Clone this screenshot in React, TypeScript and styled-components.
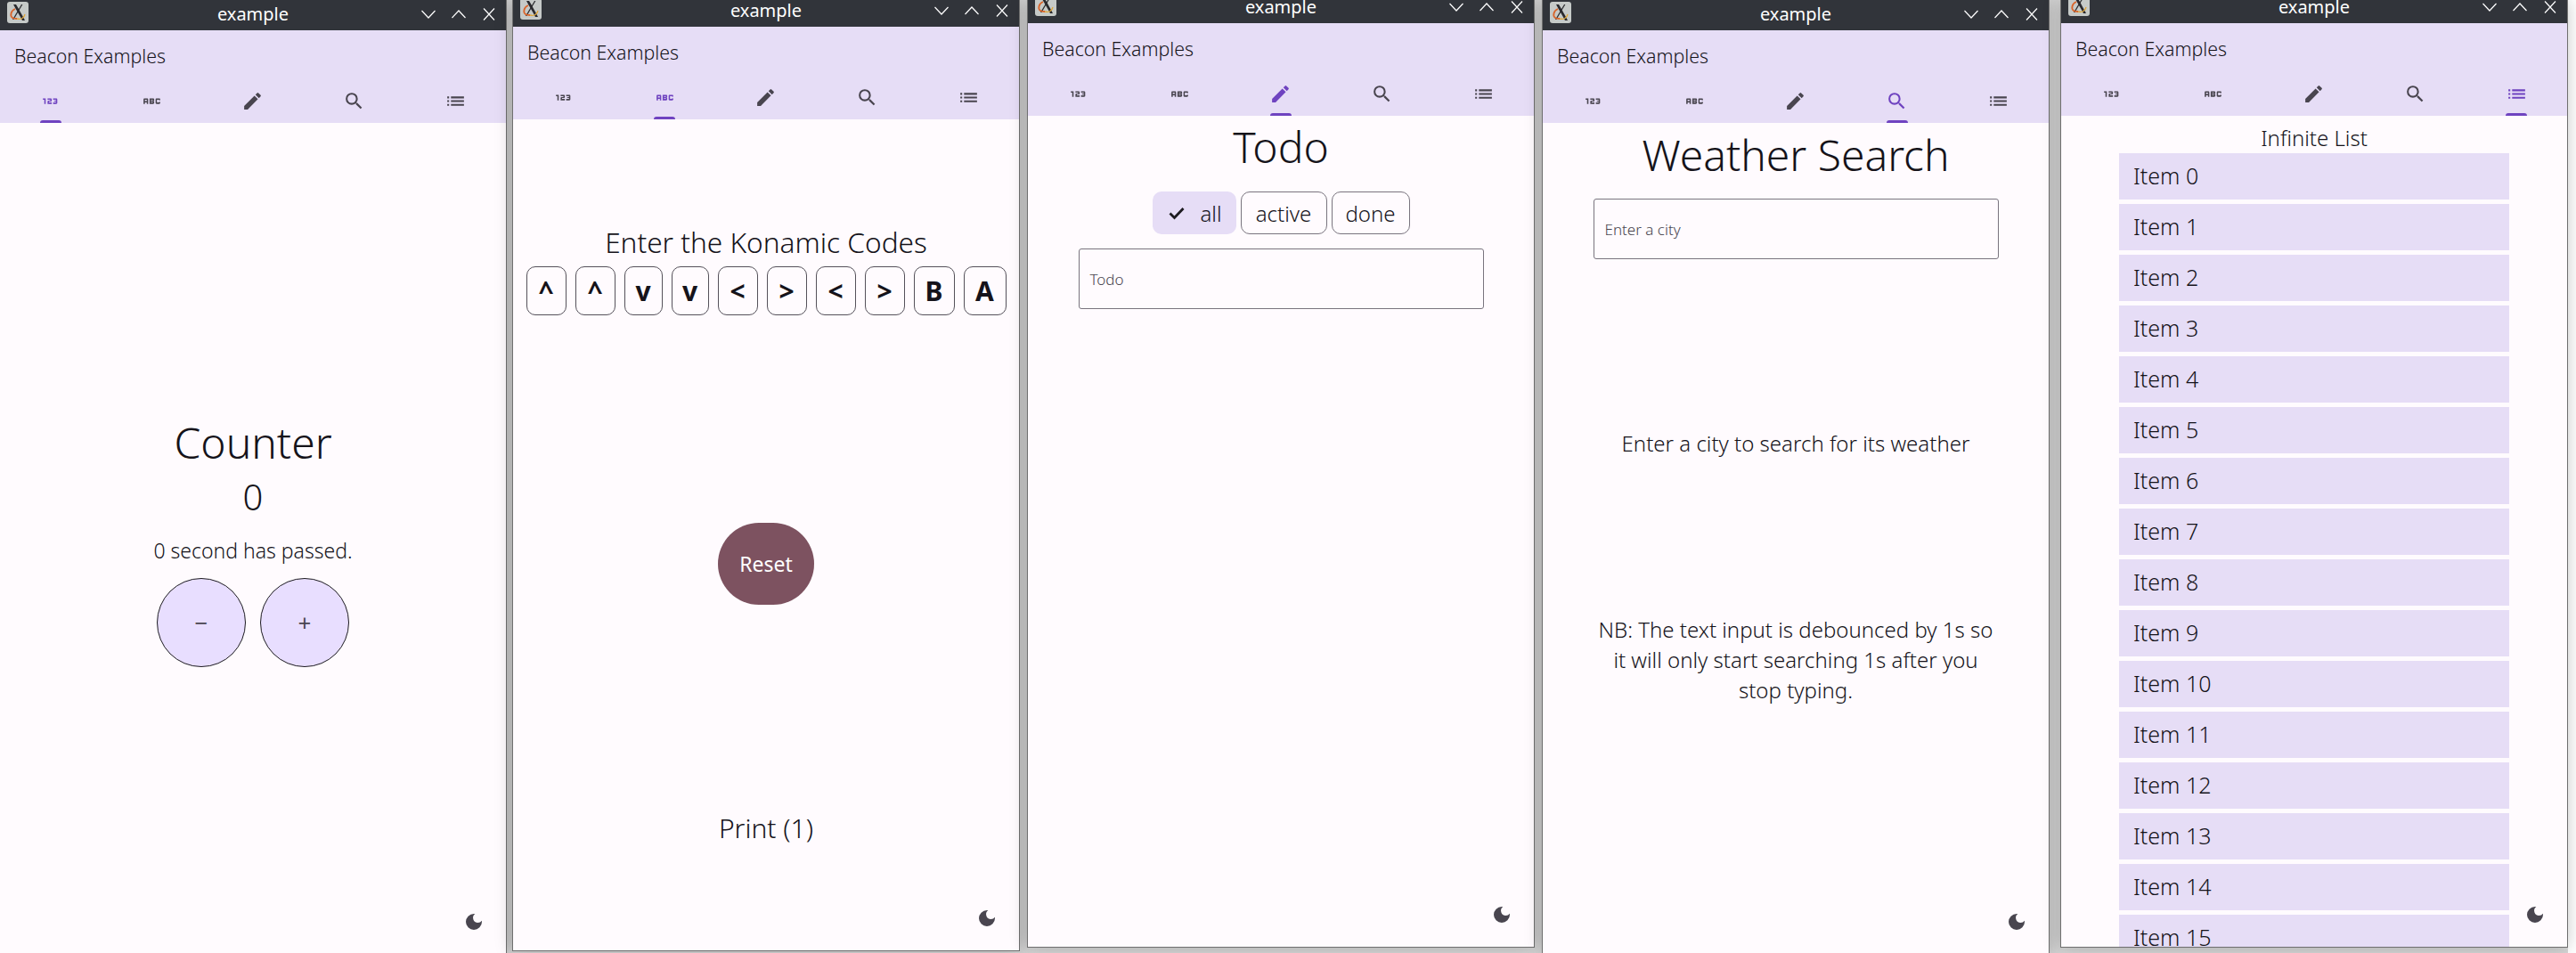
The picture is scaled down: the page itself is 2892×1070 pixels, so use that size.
import React from 'react'
import styled, { createGlobalStyle } from 'styled-components'
import { Md123, MdAbc, MdEdit, MdSearch, MdList, MdDarkMode } from 'react-icons/md'

const GlobalStyle = createGlobalStyle`
    html, body {
        margin: 0;
        padding: 0;
        background: #fff;
    }
    * {
        box-sizing: border-box;
    }
`

const UI_FONT = `"Noto Sans", "Open Sans", sans-serif`

const Desktop = styled.div`
    display: flex;
    align-items: flex-start;
    width: 2892px;
    height: 1070px;
    overflow: hidden;
    background: #d6d6d6;
    font-family: ${UI_FONT};
`

const Window = styled.section<{ $gap: number; $bottom: number }>`
    position: relative;
    display: flex;
    flex-direction: column;
    flex: none;
    width: ${({ $gap }) => ($gap ? 570 : 569)}px;
    height: ${({ $bottom }) => $bottom}px;
    margin-left: ${({ $gap }) => $gap}px;
    border-right: 1px solid #6f6f6f;
    border-bottom: 1px solid #6f6f6f;
    border-left: ${({ $gap }) => ($gap ? '1px solid #6f6f6f' : 'none')};
    background: #fffbfe;
    box-shadow: 0 0 18px rgba(0, 0, 0, 0.22);
`

const TitleBar = styled.header<{ $height: number }>`
    position: relative;
    flex: none;
    display: flex;
    align-items: flex-end;
    justify-content: center;
    height: ${({ $height }) => $height}px;
    padding-bottom: 3px;
    background: #31343a;
    color: #fff;
    font-size: 20px;
    line-height: 30px;
`

const Logo = styled.svg`
    position: absolute;
    left: 8px;
    bottom: 8px;
    width: 24px;
    height: 24px;
`

const Controls = styled.div`
    position: absolute;
    right: 11px;
    bottom: 10px;
    display: flex;
    gap: 18px;
`

const AppBar = styled.div`
    flex: none;
    height: 104px;
    background: #e6ddf6;
`

const AppTitle = styled.div`
    height: 58px;
    padding: 16px 16px 0;
    color: #15131a;
    font-size: 21.3px;
    line-height: 26px;
    font-weight: 300;
`

const Tabs = styled.div`
    display: grid;
    grid-template-columns: repeat(5, 1fr);
    height: 46px;
`

const Tab = styled.div<{ $active?: boolean }>`
    position: relative;
    display: flex;
    justify-content: center;
    padding-top: 9px;
    color: ${({ $active }) => ($active ? '#6f43c0' : '#49454f')};

    ${({ $active }) =>
        $active &&
        `&::after {
            content: '';
            position: absolute;
            bottom: 0;
            left: 50%;
            width: 24px;
            height: 3px;
            margin-left: -12px;
            border-radius: 3px 3px 0 0;
            background: #6f43c0;
        }`}
`

const Body = styled.main`
    position: relative;
    flex: 1;
    min-height: 0;
    overflow: hidden;
    display: flex;
    flex-direction: column;
    align-items: center;
    color: #15131a;
`

const Moon = styled(MdDarkMode)`
    position: absolute;
    right: 24px;
    bottom: 24px;
    color: #49454f;
`

const BigTitle = styled.h1<{ $top?: number }>`
    margin: ${({ $top }) => $top ?? 0}px 0 0;
    font-size: 48px;
    line-height: 60px;
    font-weight: 300;
`

const Count = styled.div`
    margin-top: 6px;
    font-size: 40px;
    line-height: 50px;
    font-weight: 300;
`

const Elapsed = styled.div`
    margin-top: 18px;
    font-size: 23px;
    line-height: 34px;
    font-weight: 300;
`

const CounterRow = styled.div`
    display: flex;
    gap: 16px;
    margin-top: 14px;
`

const RoundButton = styled.button`
    display: flex;
    align-items: center;
    justify-content: center;
    width: 100px;
    height: 100px;
    padding: 0;
    border: 1px solid #1d1b20;
    border-radius: 50%;
    background: #e8deff;
    color: #49454f;
    font-family: ${UI_FONT};
    font-size: 26px;
`

const Heading = styled.h2<{ $top: number }>`
    margin: ${({ $top }) => $top}px 0 0;
    font-size: 31.6px;
    line-height: 40px;
    font-weight: 300;
`

const KeyRow = styled.div`
    display: flex;
    gap: 10px;
    margin-top: 7px;
`

const KeyButton = styled.div<{ $width: number }>`
    display: flex;
    align-items: center;
    justify-content: center;
    width: ${({ $width }) => $width}px;
    height: 55px;
    border: 1px solid #55515a;
    border-radius: 10px;
    font-size: 30px;
    font-weight: 700;
`

const ResetButton = styled.button`
    width: 108px;
    height: 92px;
    margin-top: 233px;
    border: none;
    border-radius: 46px;
    background: #7d5260;
    color: #fff;
    font-family: ${UI_FONT};
    font-size: 23px;
`

const PrintLabel = styled.div`
    margin-top: 231px;
    font-size: 30px;
    line-height: 40px;
    font-weight: 300;
`

const ChipRow = styled.div`
    display: flex;
    gap: 5px;
    margin-top: 20px;
`

const Chip = styled.div<{ $width: number; $selected?: boolean }>`
    display: flex;
    align-items: center;
    justify-content: center;
    gap: 14px;
    width: ${({ $width }) => $width}px;
    height: 48px;
    border: ${({ $selected }) => ($selected ? 'none' : '1px solid #79747e')};
    border-radius: 10px;
    background: ${({ $selected }) => ($selected ? '#e6ddf6' : 'transparent')};
    font-size: 24px;
    font-weight: 300;
`

const TextField = styled.div<{ $top: number }>`
    display: flex;
    align-items: center;
    width: 455px;
    height: 68px;
    margin-top: ${({ $top }) => $top}px;
    padding: 0 12px;
    border: 1px solid #79747e;
    border-radius: 3px;
    color: #49454f;
    font-size: 17px;
    font-weight: 300;
`

const WeatherNote = styled.p<{ $top: number }>`
    width: 460px;
    margin: ${({ $top }) => $top}px 0 0;
    font-size: 24px;
    line-height: 34px;
    font-weight: 300;
    text-align: center;
`

const ListTitle = styled.div`
    margin-top: 9px;
    font-size: 24px;
    line-height: 32px;
    font-weight: 300;
`

const ItemList = styled.div`
    display: flex;
    flex-direction: column;
    gap: 5px;
    align-self: stretch;
    margin: 1px 65px 0;
`

const Item = styled.div`
    flex: none;
    display: flex;
    align-items: center;
    height: 52px;
    padding: 0 16px 2px;
    background: #e6ddf6;
    font-size: 25px;
    font-weight: 300;
`

const Spacer = styled.div`
    flex: 1;
    align-self: stretch;
    background: #fff;
`

const XLogo = () => (
    <Logo viewBox="0 0 24 24">
        <rect width="24" height="24" rx="3" fill="#c6cac8" />
        <path d="M7 3c3 6 7 12 10 18h3C17 15 13 8 10 3z" fill="#2a2a2e" />
        <path d="M16 3 6 20h1.4L17.4 3z" fill="#2a2a2e" />
        <path d="M9 8c-5 2-6 8-3 10 1.500 1 3 1 5 1" fill="none" stroke="#d9642a" strokeWidth="1.8" />
        <path d="M11 19c4 1 8 0 9-5" fill="none" stroke="#e0a83c" strokeWidth="1.3" />
    </Logo>
)

const WindowControls = () => (
    <Controls>
        <svg width="16" height="16" viewBox="0 0 16 16" fill="none" stroke="#fff" strokeWidth="1.2">
            <path d="M0.5 4 8 12 15.500 4" />
        </svg>
        <svg width="16" height="16" viewBox="0 0 16 16" fill="none" stroke="#fff" strokeWidth="1.2">
            <path d="M0.5 12 8 4 15.500 12" />
        </svg>
        <svg width="16" height="16" viewBox="0 0 16 16" fill="none" stroke="#fff" strokeWidth="1.2">
            <path d="M2 1.500 14 14.500M14 1.500 2 14.500" />
        </svg>
    </Controls>
)

const CheckMark = () => (
    <svg width="24" height="24" viewBox="0 0 24 24" fill="none" stroke="#1d1b20" strokeWidth="2.8">
        <path d="M4.500 12.500 9.500 17.500 19.500 7" />
    </svg>
)

const tabIcons = [Md123, MdAbc, MdEdit, MdSearch, MdList]

type ExampleWindowProps = {
    gap: number
    bottom: number
    titleHeight: number
    activeTab: number
    children: React.ReactNode
}

const ExampleWindow = ({ gap, bottom, titleHeight, activeTab, children }: ExampleWindowProps) => (
    <Window $gap={gap} $bottom={bottom}>
        <TitleBar $height={titleHeight}>
            <XLogo />
            example
            <WindowControls />
        </TitleBar>
        <AppBar>
            <AppTitle>Beacon Examples</AppTitle>
            <Tabs>
                {tabIcons.map((Icon, i) => (
                    <Tab key={i} $active={i === activeTab}>
                        <Icon size={25} />
                    </Tab>
                ))}
            </Tabs>
        </AppBar>
        <Body>
            {children}
            <Moon size={24} />
        </Body>
    </Window>
)

const konami: [string, number][] = [
    ['^', 45],
    ['^', 45],
    ['v', 43],
    ['v', 42],
    ['<', 45],
    ['>', 45],
    ['<', 45],
    ['>', 45],
    ['B', 46],
    ['A', 48],
]

const App = () => (
    <>
        <GlobalStyle />
        <Desktop>
            <ExampleWindow gap={0} bottom={1072} titleHeight={34} activeTab={0}>
                <BigTitle $top={329}>Counter</BigTitle>
                <Count>0</Count>
                <Elapsed>0 second has passed.</Elapsed>
                <CounterRow>
                    <RoundButton>−</RoundButton>
                    <RoundButton>+</RoundButton>
                </CounterRow>
            </ExampleWindow>

            <ExampleWindow gap={6} bottom={1068} titleHeight={30} activeTab={1}>
                <Heading $top={118}>Enter the Konamic Codes</Heading>
                <KeyRow>
                    {konami.map(([label, width], i) => (
                        <KeyButton key={i} $width={width}>
                            {label}
                        </KeyButton>
                    ))}
                </KeyRow>
                <ResetButton>Reset</ResetButton>
                <PrintLabel>Print (1)</PrintLabel>
            </ExampleWindow>

            <ExampleWindow gap={8} bottom={1064} titleHeight={26} activeTab={2}>
                <BigTitle $top={5}>Todo</BigTitle>
                <ChipRow>
                    <Chip $selected $width={94}>
                        <CheckMark />
                        all
                    </Chip>
                    <Chip $width={97}>active</Chip>
                    <Chip $width={88}>done</Chip>
                </ChipRow>
                <TextField $top={16}>Todo</TextField>
            </ExampleWindow>

            <ExampleWindow gap={8} bottom={1072} titleHeight={34} activeTab={3}>
                <BigTitle $top={6}>Weather Search</BigTitle>
                <TextField $top={19}>Enter a city</TextField>
                <WeatherNote $top={190}>Enter a city to search for its weather</WeatherNote>
                <WeatherNote $top={175}>
                    NB: The text input is debounced by 1s so it will only start searching 1s after you stop typing.
                </WeatherNote>
            </ExampleWindow>

            <ExampleWindow gap={12} bottom={1064} titleHeight={26} activeTab={4}>
                <ListTitle>Infinite List</ListTitle>
                <ItemList>
                    {Array.from({ length: 16 }, (_, i) => (
                        <Item key={i}>Item {i}</Item>
                    ))}
                </ItemList>
            </ExampleWindow>
            <Spacer />
        </Desktop>
    </>
)

export default App
